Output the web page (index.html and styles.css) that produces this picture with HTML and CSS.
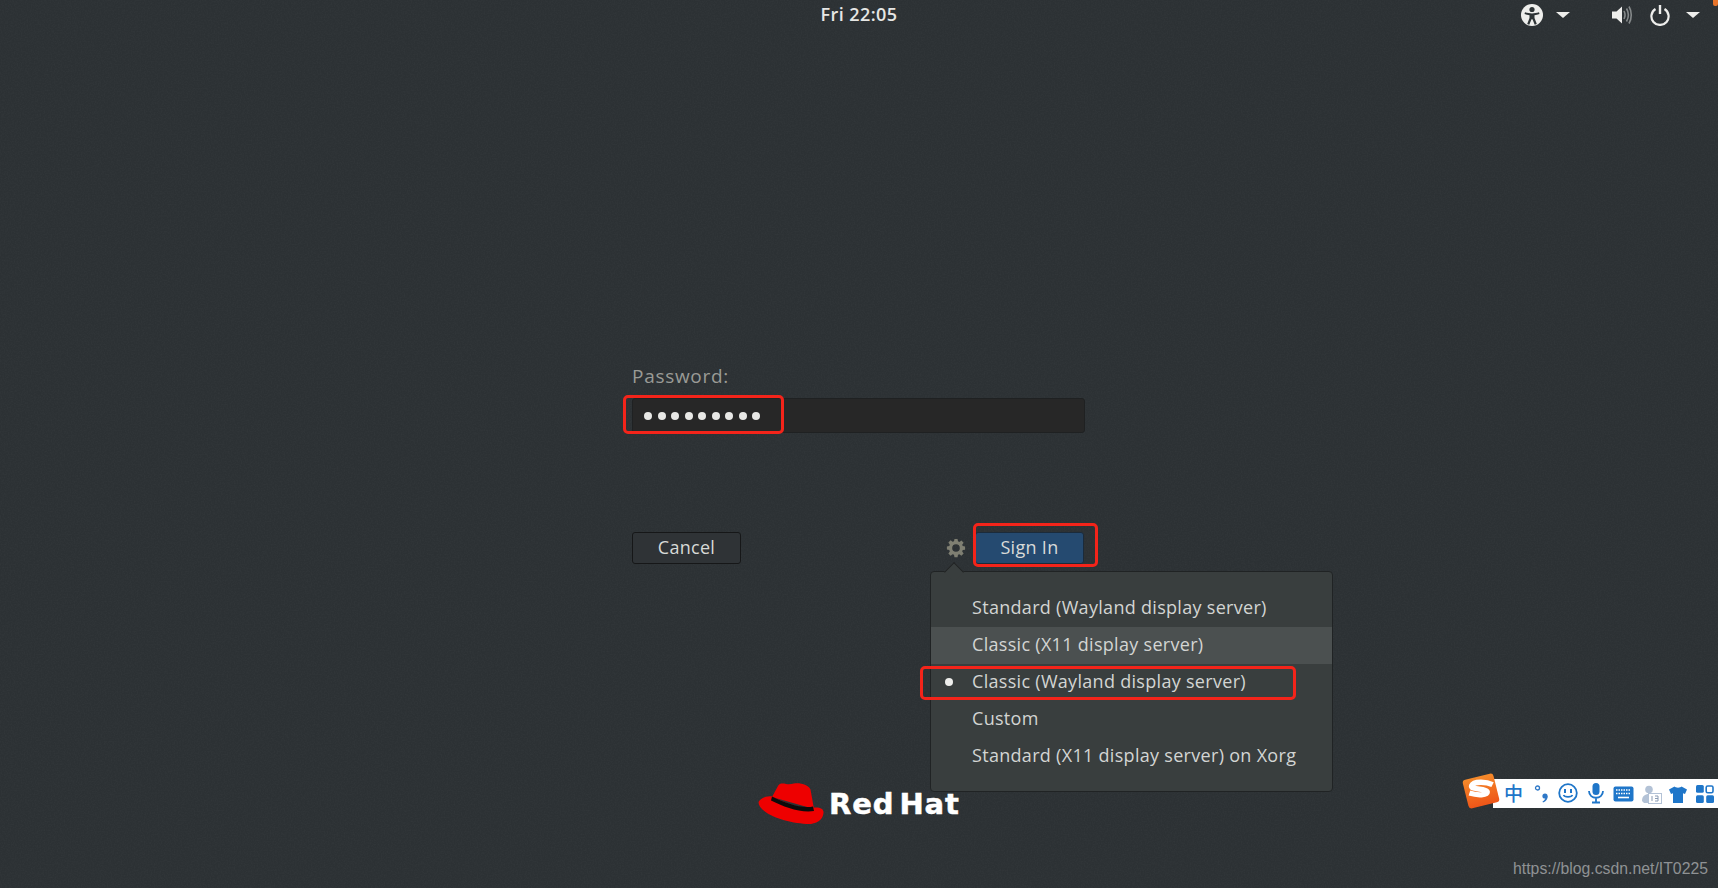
FILE: index.html
```html
<!DOCTYPE html>
<html lang="en">
<head>
<meta charset="utf-8">
<title>Sign In</title>
<link rel="stylesheet" href="styles.css">
</head>
<body>
<svg class="noise" width="1718" height="888" aria-hidden="true">
  <filter id="grain"><feTurbulence type="fractalNoise" baseFrequency="0.7" numOctaves="2" seed="4"/><feColorMatrix values="0 0 0 0 1  0 0 0 0 1  0 0 0 0 1  0.6 0 0 0 -0.2"/></filter>
  <rect width="1718" height="888" filter="url(#grain)"/>
</svg>
<header class="topbar">
  <div class="clock">Fri 22:05</div>
  <div class="indicators">
    <svg class="ico-a11y" width="24" height="24" viewBox="0 0 24 24"><circle cx="12" cy="12" r="11" fill="#eeeeec"/><circle cx="12" cy="6.500" r="2.600" fill="#2e3436"/><path d="M5 9.300c2.400.8 4.600 1.100 7 1.100s4.600-.3 7-1.100l.5 1.800c-1.700.6-3.300 1-5 1.200v2.700l2.300 6-2.100.7-2.200-5.400h-1l-2.200 5.400-2.100-.7 2.300-6v-2.700c-1.700-.2-3.300-.6-5-1.200z" fill="#2e3436"/></svg>
    <span class="caret caret-a"></span>
    <svg class="ico-vol" width="22" height="20" viewBox="0 0 22 20"><path d="M1 6.500h4.500L11 1.500v17l-5.500-5H1z" fill="#eeeeec"/><path d="M13 6c1.300 2.500 1.300 5.500 0 8M15.500 3.500c2.300 4 2.300 9 0 13M18 1.500c3 5 3 12 0 17" fill="none" stroke="#85898a" stroke-width="1.600"/></svg>
    <svg class="ico-power" width="22" height="22" viewBox="0 0 22 22"><path d="M6.500 5A8.600 8.600 0 1 0 15.500 5" fill="none" stroke="#eeeeec" stroke-width="2.200"/><path d="M11 1v9" fill="none" stroke="#eeeeec" stroke-width="2.400"/></svg>
    <span class="caret caret-b"></span>
  </div>
  <span class="corner-mark"></span>
</header>

<main class="login">
  <label class="prompt">Password:</label>
  <div class="entry">
    <span class="dots"><i></i><i></i><i></i><i></i><i></i><i></i><i></i><i></i><i></i></span>
    <span class="mark mark-entry"></span>
  </div>
  <div class="actions">
    <button class="btn">Cancel</button>
    <div class="right-actions">
      <svg class="gear" width="20" height="20" viewBox="0 0 22 22"><path fill-rule="evenodd" d="M9.300 1h3.400l.5 2.700 1.500.6 2.300-1.600 2.400 2.400-1.600 2.300.6 1.500 2.600.5v3.400l-2.600.5-.6 1.500 1.600 2.300-2.400 2.400-2.300-1.600-1.500.6-.5 2.600H9.300l-.5-2.600-1.500-.6-2.300 1.600-2.400-2.400 1.600-2.300-.6-1.500L1 12.700V9.300l2.600-.5.6-1.500-1.600-2.300L5 2.600l2.300 1.600 1.500-.6zM11 6.800a4.200 4.200 0 1 0 0 8.400 4.200 4.200 0 0 0 0-8.400z" fill="#7f7f72"/></svg>
      <button class="btn btn-primary">Sign In<span class="mark mark-signin"></span></button>
    </div>
    <nav class="menu">
      <span class="menu-arrow"></span>
      <div class="item">Standard (Wayland display server)</div>
      <div class="item hover">Classic (X11 display server)</div>
      <div class="item">Classic (Wayland display server)<span class="bullet"></span><span class="mark mark-item"></span></div>
      <div class="item">Custom</div>
      <div class="item">Standard (X11 display server) on Xorg</div>
    </nav>
  </div>
</main>

<footer class="brand">
  <svg width="68" height="44" viewBox="18 13 68 44"><path d="M32 28 38 17c1.500-3 5-2.500 8-2 3 .5 5 .2 8-.5 7-1 15 2 16.500 6L74 40z" fill="#ee0000"/><path d="M18.500 33c3-5 10-6.500 14-5.500C45 34 62 41 74 38.500c6-.5 10 1 9.500 5.500-1 8-8 11.500-17 11C46 54 19 45 18.500 33z" fill="#ee0000"/><path d="M32 27.500C45 34 62 40 73 37.500l1 4.500C60 44 44 38 31 31.500z" fill="#0b0b0b"/></svg>
  <span class="brand-name">Red Hat</span>
</footer>

<aside class="ime">
  <svg class="ime-logo" width="40" height="38" viewBox="0 0 38 36"><defs><linearGradient id="sg" x1="0" y1="0" x2="0" y2="1"><stop offset="0" stop-color="#f58a2a"/><stop offset="1" stop-color="#ee5518"/></linearGradient></defs><rect x="4" y="4" width="30" height="28" rx="3" transform="rotate(-14 19 18)" fill="url(#sg)"/><path d="M30 12c-6-3-18-3.500-20 1-1.500 4 15 2.500 15 6 0 3-9 3.500-17 1" fill="none" stroke="#fff" stroke-width="5"/></svg>
  <span class="ime-zh">中</span>
  <svg class="ime-punct" width="16" height="24" viewBox="0 0 16 24"><circle cx="3.500" cy="4" r="2" fill="none" stroke="#2e78c7" stroke-width="1.300"/><circle cx="11" cy="12" r="2.600" fill="#2e78c7"/><path d="M13.600 12c.2 3-1.500 5.500-4.600 6.500l-.5-1c1.800-.9 2.800-2.500 2.800-4z" fill="#2e78c7"/></svg>
  <svg class="ime-smile" width="20" height="20" viewBox="0 0 20 20"><circle cx="10" cy="10" r="8.800" fill="none" stroke="#1f76c9" stroke-width="1.800"/><path d="M7 6v4M13 6v4" stroke="#1f76c9" stroke-width="2"/><path d="M5.500 12c1 2.500 8 2.500 9 0" fill="none" stroke="#1f76c9" stroke-width="1.600"/></svg>
  <svg class="ime-mic" width="16" height="22" viewBox="0 0 16 22"><rect x="4.500" y="1" width="7" height="12" rx="3.500" fill="#1f76c9"/><path d="M1 9c0 9 14 9 14 0M8 16v4M4 20.500h8" fill="none" stroke="#1f76c9" stroke-width="1.800"/></svg>
  <svg class="ime-kbd" width="21" height="16" viewBox="0 0 21 16"><rect x=".5" y=".5" width="20" height="15" rx="2" fill="#1f76c9"/><path d="M3 4h15M3 7.500h15" stroke="#fff" stroke-width="1.600" stroke-dasharray="1.500 1"/><path d="M5 11.500h11" stroke="#fff" stroke-width="1.600"/></svg>
  <svg class="ime-user" width="21" height="20" viewBox="0 0 21 20"><circle cx="8" cy="4.500" r="3.800" fill="#b3c2d6"/><path d="M1 16c0-5 3-7 7-7h4v9H3z" fill="#b3c2d6"/><rect x="7.500" y="8.500" width="13" height="10" fill="#fff" stroke="#b3c2d6"/><path d="M11 11v5M14 11h3v5h-3M14 13.500h3" fill="none" stroke="#8a9bb3"/></svg>
  <svg class="ime-shirt" width="18" height="17" viewBox="0 0 18 17"><path d="M5.500.5c1 1.500 6 1.500 7 0L18 3.500 16 8l-2-.8V17H4V7.200L2 8 0 3.500z" fill="#1f76c9"/></svg>
  <svg class="ime-grid" width="18" height="18" viewBox="0 0 18 18"><rect x="0" y="0" width="7.800" height="7.800" rx="1.500" fill="#1f76c9"/><rect x="10.200" y="1" width="6.800" height="6.800" rx="1.500" fill="none" stroke="#1f76c9" stroke-width="1.600"/><rect x="0" y="10.200" width="7.800" height="7.800" rx="1.500" fill="#1f76c9"/><rect x="10.200" y="10.200" width="7.800" height="7.800" rx="1.500" fill="#1f76c9"/></svg>
</aside>
<div class="watermark">https://blog.csdn.net/IT0225</div>
</body>
</html>
```
FILE: styles.css
```css
* { box-sizing: border-box; }
html, body { margin: 0; height: 100%; }
body {
  position: relative;
  width: 1718px;
  height: 888px;
  overflow: hidden;
  background: #2c3134;
  color: #d8dad8;
  font-family: "Open Sans", "Noto Sans", sans-serif;
  font-size: 18px;
}
.noise { position: absolute; left: 0; top: 0; opacity: 0.08; }

.topbar {
  position: relative;
  height: 28px;
  display: flex;
  justify-content: center;
  align-items: center;
}
.clock { color: #e6e6e4; font-size: 18px; font-weight: 600; letter-spacing: .4px; }
.indicators {
  position: absolute;
  top: 3px;
  left: 1520px;
  display: flex;
  align-items: center;
  height: 24px;
}
.caret { width: 0; height: 0; border: 7px solid transparent; border-top: 6px solid #eeeeec; border-bottom: 0; }
.caret-a { margin-left: 12px; }
.ico-vol { margin-left: 41px; }
.ico-power { margin-left: 16px; }
.caret-b { margin-left: 15px; }
.corner-mark { position: absolute; right: 0; top: 0; width: 5px; height: 6px; background: #e8742a; border-radius: 0 0 2px 2px; }

.login {
  position: relative;
  width: 454px;
  padding-right: 1px;
  margin: 335px auto 0;
}
.prompt { display: block; height: 35px; line-height: 26px; color: #9a9b96; font-size: 19px; letter-spacing: .7px; }
.entry {
  position: relative;
  height: 35px;
  background: #272727;
  border: 1px solid #1f2122;
  border-radius: 3px;
  display: flex;
  align-items: center;
  padding-left: 11px;
}
.dots { display: flex; gap: 5.500px; }
.dots i { width: 8px; height: 8px; border-radius: 50%; background: #e8e8e6; }

.mark { position: absolute; border: 3px solid #f4241a; border-radius: 5px; pointer-events: none; }
.mark-entry { left: -10px; top: -4px; width: 161px; height: 39px; }
.mark-signin { left: -3px; top: -10px; width: 125px; height: 44px; }
.mark-item { left: -11px; top: 2px; width: 376px; height: 34px; }

.actions {
  position: relative;
  margin-top: 99px;
  display: flex;
  justify-content: space-between;
  align-items: center;
}
.btn {
  position: relative;
  width: 109px;
  height: 32px;
  padding: 0 0 2px;
  color: #d8dad8;
  background: #2f3336;
  border: 1px solid #161718;
  border-radius: 3px;
  font: 18px "Open Sans", "Noto Sans", sans-serif;
  letter-spacing: .3px;
}
.btn-primary { background: #254a70; border-color: #1b2b3b; }
.right-actions { display: flex; align-items: center; gap: 9px; margin-right: 1px; }
.gear { display: block; }

.menu {
  position: absolute;
  left: 298px;
  top: 39px;
  width: 403px;
  height: 221px;
  padding-top: 18px;
  background: #393e3e;
  border: 1px solid #202324;
  border-radius: 4px;
}
.menu-arrow {
  position: absolute;
  left: 16px;
  top: -7px;
  width: 14px;
  height: 14px;
  transform: rotate(45deg);
  background: #393e3e;
  border: 1px solid #202324;
  border-right: 0;
  border-bottom: 0;
}
.item { position: relative; height: 37px; line-height: 34px; padding-left: 41px; color: #d3d5d3; font-size: 18px; letter-spacing: .3px; white-space: nowrap; }
.item.hover { background: #4b5050; }
.bullet { position: absolute; left: 14px; top: 14px; width: 8px; height: 8px; border-radius: 50%; background: #eeeeec; }

.brand {
  position: absolute;
  left: 758px;
  top: 782px;
  display: flex;
  align-items: center;
  gap: 3px;
}
.brand svg { display: block; }
.brand-name { color: #fff; font: 700 29px "DejaVu Sans", sans-serif; letter-spacing: .9px; word-spacing: -6px; -webkit-text-stroke: .5px #fff; }

.ime {
  position: absolute;
  left: 1493px;
  top: 779px;
  width: 225px;
  height: 29px;
  background: #fff;
}
.ime > * { position: absolute; }
.ime-logo { left: -32px; top: -7px; }
.ime-zh { left: 11px; top: 1px; color: #1f76c9; font: 500 19px/26px "Noto Sans CJK SC", sans-serif; }
.ime-punct { left: 41px; top: 5px; }
.ime-smile { left: 65px; top: 4px; }
.ime-mic { left: 95px; top: 3px; }
.ime-kbd { left: 120px; top: 7px; }
.ime-user { left: 148px; top: 6px; }
.ime-shirt { left: 176px; top: 7px; }
.ime-grid { left: 203px; top: 6px; }

.watermark {
  position: absolute;
  right: 10px;
  top: 858px;
  color: #8f9294;
  font: 15.800px/22px "Liberation Sans", sans-serif;
}
```
